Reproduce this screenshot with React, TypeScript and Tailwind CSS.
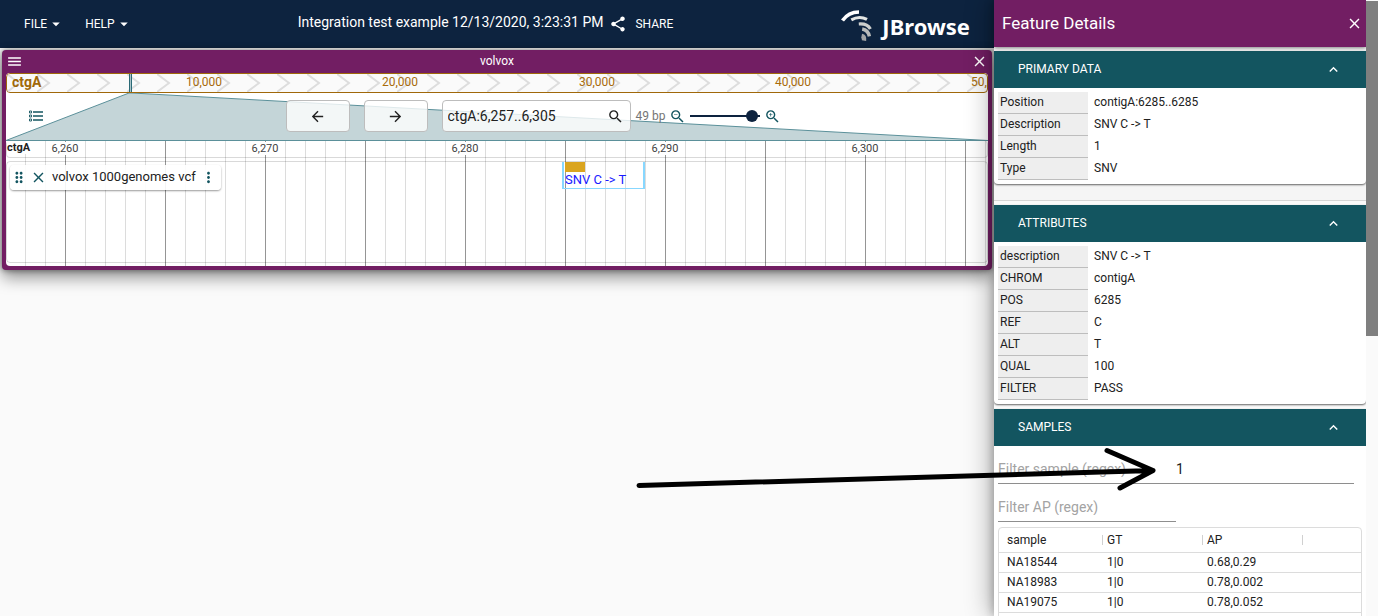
import { useState } from "react";
import type { ReactNode } from "react";
import {
  MdArrowBack,
  MdArrowDropDown,
  MdArrowForward,
  MdClose,
  MdDragIndicator,
  MdExpandLess,
  MdMenu,
  MdMoreVert,
  MdSearch,
  MdShare,
  MdZoomIn,
  MdZoomOut,
} from "react-icons/md";

const overviewTicks = ["10,000", "20,000", "30,000", "40,000", "50,000"];
const rulerTicks = ["6,260", "6,270", "6,280", "6,290", "6,300"];

const primaryData = [
  ["Position", "contigA:6285..6285"],
  ["Description", "SNV C -> T"],
  ["Length", "1"],
  ["Type", "SNV"],
];

const attributes = [
  ["description", "SNV C -> T"],
  ["CHROM", "contigA"],
  ["POS", "6285"],
  ["REF", "C"],
  ["ALT", "T"],
  ["QUAL", "100"],
  ["FILTER", "PASS"],
];

const samples = [
  ["NA18544", "1|0", "0.68,0.29"],
  ["NA18983", "1|0", "0.78,0.002"],
  ["NA19075", "1|0", "0.78,0.052"],
];

function Logo() {
  return (
    <div className="flex items-center gap-2 text-white">
      <svg viewBox="0 0 36 34" className="h-[34px] w-9" fill="none" aria-hidden="true">
        <path d="M4.5 13.5C8 8.5 14 5 21 5" stroke="#ffffff" strokeWidth="3.6" />
        <path d="M13.3 12.8C18 10.2 24 9.8 29 12.4" stroke="#e3e5e4" strokeWidth="3.2" />
        <path d="M20.8 17C26 16.6 30.4 18.4 32.4 22" stroke="#cdcfce" strokeWidth="3.2" />
        <path d="M24.2 22C27.6 22.6 30.6 25.2 31.4 29.4" stroke="#b9bbba" strokeWidth="3.4" />
        <path d="M23.6 28.8C25.6 29.2 26.4 31 26 33.6" stroke="#a3a5a6" strokeWidth="4.4" />
      </svg>
      <span className="pt-1 font-['Noto_Sans','Open_Sans',sans-serif] text-[22px] leading-[34px] font-bold">
        JBrowse
      </span>
    </div>
  );
}

function AppHeader() {
  return (
    <header className="flex h-12 items-center bg-[#0d233f] pr-6 pl-6 text-white">
      <nav className="flex items-center gap-5 text-xs">
        <button className="flex items-center uppercase">
          File
          <MdArrowDropDown className="h-[18px] w-[18px]" />
        </button>
        <button className="flex items-center uppercase">
          Help
          <MdArrowDropDown className="h-[18px] w-[18px]" />
        </button>
      </nav>
      <div className="flex flex-1 items-center justify-center gap-[6px]">
        <h1 className="pb-1 text-sm">Integration test example 12/13/2020, 3:23:31 PM</h1>
        <button className="flex items-center gap-2 text-xs uppercase">
          <MdShare className="h-[18px] w-[18px]" />
          Share
        </button>
      </div>
      <Logo />
    </header>
  );
}

function Overview() {
  return (
    <div className="relative h-5 overflow-hidden rounded border border-[#a0680a] bg-[#fafafa]">
      <svg className="h-full w-full" aria-hidden="true">
        <defs>
          <pattern id="chevrons" width="30" height="18" patternUnits="userSpaceOnUse">
            <path d="M0 0L12 9L0 18" fill="none" stroke="#dddddd" strokeWidth="2" />
          </pattern>
        </defs>
        <rect width="100%" height="100%" fill="url(#chevrons)" />
      </svg>
      <span className="absolute top-0 left-[5px] text-sm leading-4 font-bold text-[#a0680a]">ctgA</span>
      {overviewTicks.map((tick, i) => (
        <span
          key={tick}
          className="absolute top-0 -translate-x-1/2 text-xs leading-4 text-[#a86c0c]"
          style={{ left: Math.round(197 + i * 196.3) }}
        >
          {tick}
        </span>
      ))}
      <div className="absolute top-0 bottom-0 left-[122px] w-[3px] border-x border-[#2b6a76] bg-[#a9c3c8]" />
    </div>
  );
}

function ListIcon() {
  return (
    <svg viewBox="0 0 16 14" className="h-[14px] w-4" fill="none" stroke="#135560" aria-hidden="true">
      <path d="M5 3H15M5 7H15M5 11H15" strokeWidth="1.4" />
      <path d="M1.5 2H3.5V4H1.5ZM1.5 6H3.5V8H1.5ZM1.5 10H3.5V12H1.5Z" strokeWidth="0.9" />
    </svg>
  );
}

function NavControls() {
  const [location, setLocation] = useState("ctgA:6,257..6,305");
  const [zoom, setZoom] = useState(95);
  const box = "h-8 rounded border border-[#bdbdbd] bg-white/80 text-[#212121]";
  return (
    <div className="relative h-12">
      <svg
        className="absolute inset-0 h-full w-full"
        viewBox="0 0 982 48"
        preserveAspectRatio="none"
        aria-hidden="true"
      >
        <path d="M0 47.5L123 0H126L982 47.5Z" fill="#c4d5d8" stroke="#5b909a" strokeWidth="1" />
      </svg>
      <div className="relative flex h-full items-center px-[22px] pb-[2px]">
        <button aria-label="Open track selector">
          <ListIcon />
        </button>
        <div className="flex flex-1 items-center justify-center pl-[57px]">
          <button aria-label="Pan left" className={`${box} mr-[14px] flex w-16 items-center justify-center`}>
            <MdArrowBack className="h-[17px] w-[17px]" />
          </button>
          <button aria-label="Pan right" className={`${box} mr-[14px] flex w-16 items-center justify-center`}>
            <MdArrowForward className="h-[17px] w-[17px]" />
          </button>
          <label className={`${box} mr-[5px] flex w-[189px] items-center pr-[6px] pl-[5px]`}>
            <input
              aria-label="Location"
              className="min-w-0 flex-1 bg-transparent text-sm outline-none"
              value={location}
              onChange={(e) => setLocation(e.target.value)}
            />
            <MdSearch className="h-[17px] w-[17px]" />
          </label>
          <span className="mr-1 text-xs text-[#757575]">49 bp</span>
          <button aria-label="Zoom out" className="mr-1 text-[#135560]">
            <MdZoomOut className="h-[17px] w-[17px]" />
          </button>
          <input
            type="range"
            aria-label="Zoom level"
            className="mr-1 h-3 w-[70px] appearance-none bg-transparent [&::-webkit-slider-runnable-track]:h-[2px] [&::-webkit-slider-runnable-track]:bg-[#0d233f] [&::-webkit-slider-thumb]:-mt-[5px] [&::-webkit-slider-thumb]:h-3 [&::-webkit-slider-thumb]:w-3 [&::-webkit-slider-thumb]:appearance-none [&::-webkit-slider-thumb]:rounded-full [&::-webkit-slider-thumb]:bg-[#0d233f]"
            value={zoom}
            onChange={(e) => setZoom(Number(e.target.value))}
          />
          <button aria-label="Zoom in" className="text-[#135560]">
            <MdZoomIn className="h-[17px] w-[17px]" />
          </button>
        </div>
      </div>
    </div>
  );
}

function Tracks() {
  return (
    <div className="relative h-[125px]">
      <svg className="absolute inset-0 h-full w-full" aria-hidden="true">
        <defs>
          <pattern id="grid" x="59" width="100" height="10" patternUnits="userSpaceOnUse">
            <path d="M0.5 0V10" stroke="#959595" />
            <path d="M20.5 0V10M40.5 0V10M60.5 0V10M80.5 0V10" stroke="#dcdcdc" />
          </pattern>
        </defs>
        <rect width="100%" height="100%" fill="url(#grid)" />
      </svg>
      <div className="relative mb-[3px] h-[17px] rounded border border-t-0 border-black/15">
        <span className="absolute top-0 left-0 bg-white text-[11px] leading-[13px] font-bold text-[#212121]">ctgA</span>
        {rulerTicks.map((tick, i) => (
          <span
            key={tick}
            className="absolute top-[1px] -translate-x-1/2 bg-white text-[11px] leading-[13px] text-[#424242]"
            style={{ left: 58 + i * 200 }}
          >
            {tick}
          </span>
        ))}
      </div>
      <div className="relative h-[102px] rounded border border-black/15">
        <div className="absolute top-[3px] left-[3px] flex h-[25px] w-[211px] items-center rounded bg-white/90 px-1 pb-px text-[13px] text-[#212121] shadow-[0_1px_2px_rgba(0,0,0,0.4)]">
          <MdDragIndicator className="mr-[6px] h-[17px] w-[10px] text-[#135560]" preserveAspectRatio="xMidYMid slice" />
          <button aria-label="Close track" className="mr-[5px] text-[#135560]">
            <MdClose className="h-[17px] w-[17px]" />
          </button>
          <span className="whitespace-nowrap">volvox 1000genomes vcf</span>
          <button aria-label="Track menu" className="ml-1 text-[#135560]">
            <MdMoreVert className="h-[17px] w-[17px]" />
          </button>
        </div>
        <div className="absolute top-0 left-[555px] h-[27px] w-[83px] border-x-2 border-b border-[#87d7ff] pl-px">
          <div className="h-[10px] w-5 bg-[#daa520]" />
          <span className="block text-[13px] leading-[15px] whitespace-nowrap text-[#1a1aff]">SNV C -&gt; T</span>
        </div>
      </div>
    </div>
  );
}

function LinearView() {
  return (
    <section className="mx-[2px] mt-[2px] rounded bg-[#721e63] px-1 pb-1 shadow-[0_8px_16px_rgba(0,0,0,0.4),0_0_6px_rgba(0,0,0,0.5)]">
      <div className="flex h-[23px] items-center justify-between pb-px text-white">
        <button aria-label="View menu">
          <MdMenu className="h-[17px] w-[17px]" />
        </button>
        <h2 className="text-xs">volvox</h2>
        <button aria-label="Close view">
          <MdClose className="h-[17px] w-[17px]" />
        </button>
      </div>
      <div className="overflow-hidden rounded bg-white">
        <Overview />
        <NavControls />
        <Tracks />
      </div>
    </section>
  );
}

function Panel({ title, children }: { title: string; children: ReactNode }) {
  return (
    <section className="rounded-b bg-white shadow-[0_1px_2px_rgba(0,0,0,0.6)]">
      <button className="flex h-[37px] w-full items-center justify-between bg-[#135560] px-6 pb-px text-xs text-white uppercase">
        {title}
        <MdExpandLess className="h-[17px] w-[17px]" />
      </button>
      <div className="p-1">{children}</div>
    </section>
  );
}

function Fields({ rows }: { rows: string[][] }) {
  return (
    <dl>
      {rows.map(([name, value]) => (
        <div key={name} className="flex h-[22px] text-xs leading-5">
          <dt className="w-[90px] border-b border-[#bdbdbd] bg-[#eeeeee] pl-[2px]">{name}</dt>
          <dd className="pl-[6px]">{value}</dd>
        </div>
      ))}
    </dl>
  );
}

function FilterField({ label, initial }: { label: string; initial: string }) {
  const [value, setValue] = useState(initial);
  return (
    <input
      aria-label={label}
      placeholder={label}
      value={value}
      onChange={(e) => setValue(e.target.value)}
      className="mb-2 h-[30px] w-[178px] border-b border-[#8e8e8e] text-sm outline-none placeholder:text-[#a3a3a3]"
    />
  );
}

function SampleTable() {
  return (
    <div className="mt-[-3px] min-h-24 overflow-hidden rounded border border-[#dcdcdc]">
      <table className="w-full table-fixed text-left text-xs">
        <thead>
          <tr className="h-6 border-b border-[#dcdcdc]">
            {["sample", "GT", "AP"].map((name) => (
              <th key={name} className="w-[100px] pl-2 font-normal">
                <div className="mr-[-4px] flex items-center justify-between">
                  {name}
                  <span className="h-[10px] w-px bg-[#d0d0d0]" />
                </div>
              </th>
            ))}
            <th />
          </tr>
        </thead>
        <tbody>
          {samples.map((row) => (
            <tr key={row[0]} className="h-5 border-b border-[#dcdcdc]">
              {row.map((cell) => (
                <td key={cell} className="pb-px pl-2">
                  {cell}
                </td>
              ))}
              <td />
            </tr>
          ))}
        </tbody>
      </table>
    </div>
  );
}

function FeatureDrawer() {
  return (
    <aside className="relative h-full w-[372px] shrink-0 overflow-hidden bg-[#fafafa] text-[#212121]">
      <div className="relative flex h-[47px] items-center justify-between bg-[#721e63] pr-[3px] pl-2 text-white shadow-[0_1px_4px_rgba(0,0,0,0.5)]">
        <h2 className="text-[17px]">Feature Details</h2>
        <button aria-label="Close details">
          <MdClose className="h-[17px] w-[17px]" />
        </button>
      </div>
      <div className="mt-1 bg-[#f5f5f5]">
        <Panel title="Primary data">
          <Fields rows={primaryData} />
        </Panel>
        <hr className="mt-4 mb-1 border-[#d6d6d6]" />
      </div>
      <div className="flex flex-col gap-[5px]">
        <Panel title="Attributes">
          <Fields rows={attributes} />
        </Panel>
        <Panel title="Samples">
          <div className="flex flex-wrap pt-1">
            <FilterField label="Filter sample (regex)" initial="" />
            <FilterField label="Filter GT (regex)" initial="1" />
            <FilterField label="Filter AP (regex)" initial="" />
          </div>
          <SampleTable />
        </Panel>
      </div>
    </aside>
  );
}

function PointerArrow() {
  return (
    <svg
      className="pointer-events-none absolute top-[446px] left-[635px] h-12 w-[524px]"
      viewBox="0 0 524 48"
      fill="none"
      stroke="#000000"
      strokeWidth="5"
      strokeLinecap="round"
      strokeLinejoin="round"
      aria-hidden="true"
    >
      <path d="M4 39.5L518 24.5M472 4.5L518 24.5L485 42" />
    </svg>
  );
}

export default function App() {
  return (
    <div className="relative flex h-screen overflow-hidden bg-[#fafafa] font-[Roboto,sans-serif]">
      <main className="min-w-0 flex-1">
        <AppHeader />
        <LinearView />
      </main>
      <div className="relative shadow-[-4px_0_24px_rgba(0,0,0,0.3),-2px_0_8px_rgba(0,0,0,0.2)]">
        <FeatureDrawer />
      </div>
      <div className="relative w-3 shrink-0 bg-[#fafafa] pt-px">
        <div className="h-[335px] bg-[#7f7f7f]" />
      </div>
      <PointerArrow />
    </div>
  );
}
